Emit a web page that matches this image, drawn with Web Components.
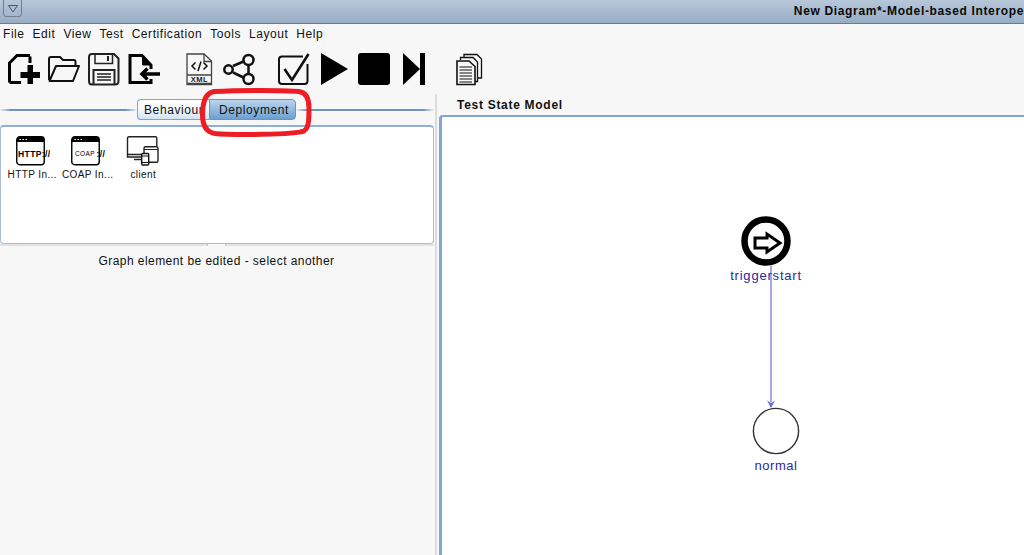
<!DOCTYPE html>
<html><head><meta charset="utf-8"><style>
html,body{margin:0;height:100%;overflow:hidden;background:#f7f7f7}
body{font-family:"Liberation Sans",Arial,sans-serif;font-size:12px;color:#111}
app-shell{height:555px}
</style></head><body>
<app-shell></app-shell>
<script>
function def(name,html){customElements.define(name,class extends HTMLElement{constructor(){super();this.attachShadow({mode:'open'}).innerHTML=html;}})}

def('title-bar',`<style>
:host{display:flex;align-items:flex-start;height:23px;box-sizing:content-box;border-bottom:1px solid #5f7f9f;background:linear-gradient(#b7c7da,#98adc5);overflow:hidden;position:relative}
.btn{width:17px;height:16px;margin:-1px 0 0 3px;border:1px solid #6f7f8f;border-radius:0 0 3px 3px;display:flex;align-items:center;justify-content:center;flex:none}
.t{margin-left:auto;font:bold 12px "Liberation Sans",sans-serif;letter-spacing:.65px;white-space:nowrap;line-height:22px;color:#0a0a0a}
</style><div class="btn"><svg width="12" height="9" viewBox="0 0 12 9"><path d="M1.5 1.5H10.5L6 8Z" fill="none" stroke="#4a5a6a"/></svg></div><div class="t"><slot></slot></div>`);

def('menu-bar',`<style>
:host{display:flex;height:20px;padding-left:3px;gap:8px;align-items:center;font:12px "Liberation Sans",sans-serif;letter-spacing:.55px;color:#111}
</style><slot></slot>`);

def('tool-bar',`<style>
:host{display:flex;height:46px;align-items:flex-start;padding:9px 0 0 8px;box-sizing:border-box}
::slotted(svg){flex:none;display:block}
</style><slot></slot>`);

def('tab-switch',`<style>
:host{display:flex;align-items:center;height:21px;margin-top:9px;position:relative}
.line{height:2px;background:linear-gradient(90deg,#eef2f6,#6f93bb 8%,#6f93bb 92%,#eef2f6)}
.line.r{width:138px}
.line.l{width:137px}
.tabs{display:flex;height:21px;font:12px "Liberation Sans",sans-serif;letter-spacing:.6px}
.tab{box-sizing:border-box;border:1px solid #7fa3cc;display:flex;align-items:center;justify-content:center;color:#111}
.a{width:72px;border-radius:4px 0 0 4px;background:linear-gradient(#fff,#f4f8fc 50%,#d2e3f4);padding-left:6px;justify-content:flex-start;border-right:0}
.b{width:87px;border-radius:0 4px 4px 0;background:linear-gradient(#bcd4ec,#94bade 50%,#6c9fd2);border-color:#6a94c2;padding-left:3px}
</style><div class="line l"></div><div class="tabs"><div class="tab a">Behaviour</div><div class="tab b">Deployment</div></div><div class="line r"></div>`);

def('palette-panel',`<style>
:host{display:flex;box-sizing:border-box;height:119px;margin-top:5px;width:434px;padding:8px 0 0 3.5px;background:#fff;border:1px solid #a9bfd8;border-top:2px solid #8eb0d6;border-radius:4px;align-items:flex-start}
</style><slot></slot>`);

def('palette-item',`<style>
:host{display:flex;flex-direction:column;align-items:center;width:55.5px;font:10px "Liberation Sans",sans-serif;letter-spacing:.4px;color:#111;white-space:nowrap}
.ic{height:32px;display:flex;align-items:center}
.l{line-height:12px;margin-top:2px}
</style><div class="ic"><slot name="i"></slot></div><div class="l"><slot></slot></div>`);

def('side-panel',`<style>
:host{display:flex;flex-direction:column;width:435px;flex:none}
.handle{height:2px;position:relative;background:#e2e2e2;width:434px}
.handle i{position:absolute;left:207px;top:0;width:17px;height:2px;background:#f7f7f7;border:solid #b8c4d2;border-width:0 1px}
.msg{text-align:center;margin-top:7px;width:433px;font:12px "Liberation Sans",sans-serif;letter-spacing:.45px;line-height:16px;color:#111}
</style><slot></slot><div class="handle"><i></i></div><div class="msg">Graph element be edited - select another</div>`);

def('state-node',`<style>
:host{position:absolute;display:block;font:13px "Liberation Sans",sans-serif;color:#2a2a9a;white-space:nowrap;transform:translateX(-50%);line-height:15px}
</style><slot></slot>`);

def('state-canvas',`<style>
:host{display:block;flex:1;position:relative;background:#fff;border:solid #7fa6d6;border-width:2px 0 0 3px;border-radius:4px 0 0 0;overflow:hidden}
svg{position:absolute;left:0;top:0}
</style><svg width="585" height="440" viewBox="442 117 585 440">
<line x1="771" y1="266" x2="771" y2="402" stroke="#6a6ae8" stroke-width="1.2"/>
<path d="M767 400.500L771 403 775 400.500 771 408Z" fill="#6a6ae8"/>
<circle cx="766" cy="241" r="21.500" fill="#fff" stroke="#000" stroke-width="6.500"/>
<path d="M755 238H767V234L780 243 767 252V248H755Z" fill="#fff" stroke="#000" stroke-width="3"/>
<circle cx="776" cy="431" r="22.600" fill="#fff" stroke="#333" stroke-width="1.400"/>
</svg><slot></slot>`);

def('model-panel',`<style>
:host{display:flex;flex-direction:column;flex:1;min-width:0;padding-left:2px}
.h{font:bold 12px "Liberation Sans",sans-serif;letter-spacing:.71px;height:25px;line-height:31px;padding-left:18px;box-sizing:border-box;color:#111}
</style><div class="h">Test State Model</div><slot></slot>`);

def('work-area',`<style>
:host{display:flex;flex:1;min-height:0}
.d{width:2px;flex:none;background:#dcdcdc;margin-top:4px}
</style><slot name="left"></slot><div class="d"></div><slot name="right"></slot>`);

def('red-mark',`<style>
:host{position:absolute;left:195px;top:85px;width:120px;height:55px;display:block}
svg{display:block}
</style><svg width="120" height="55" viewBox="195 85 120 55"><path d="M214 91.500C240 90 285 90 299 91.500C306 92.500 309 98 309 108C309 122 308.500 128 304 131C295 135 230 135 215 133.500C206 132 202.500 125 202.500 115C202.500 103 205 93 214 91.500Z" fill="none" stroke="#ee1c25" stroke-width="5"/></svg>`);

def('app-shell',`<style>
:host{display:flex;flex-direction:column;position:relative;overflow:hidden;width:1024px}
</style>
<title-bar>New Diagram*-Model-based Interope</title-bar>
<menu-bar><span>File</span><span>Edit</span><span>View</span><span>Test</span><span>Certification</span><span>Tools</span><span>Layout</span><span>Help</span></menu-bar>
<tool-bar>
<svg width="32" height="32" viewBox="8 53 32 32" style="margin-right:8px"><path d="M30 56.500V63M9.500 82.500V63L17 55.500H30M9.500 82.500H21" fill="none" stroke="#000" stroke-width="3"/><path d="M20.500 72H27.500V65H33V72H40V78H33V84H27.500V78H20.500Z" fill="#000"/></svg>
<svg width="32" height="32" viewBox="48 53 32 32" style="margin-right:8px"><path d="M49 80V59Q49 57 51 57H60L63 60H74Q75.500 60 75.500 62V65" fill="none" stroke="#111" stroke-width="2"/><path d="M49.500 81L56 66H79L73 81Z" fill="none" stroke="#111" stroke-width="2" stroke-linejoin="round"/></svg>
<svg width="32" height="33" viewBox="88 53 32 33" style="margin-right:8px"><path d="M92 54H114L118.500 58.500V81Q118.500 84.500 115 84.500H92Q89 84.500 89 81V57Q89 54 92 54Z" fill="none" stroke="#222" stroke-width="2"/><path d="M95 54V63.500H112.500V54" fill="none" stroke="#222" stroke-width="1.500"/><path d="M107 56H109V61H107Z" fill="#222"/><path d="M93.500 84V70H114.500V84" fill="none" stroke="#222" stroke-width="2"/><path d="M97 74H111M97 77H111M97 80H111" stroke="#222" stroke-width="1.300"/></svg>
<svg width="33" height="33" viewBox="128 53 33 33" style="margin-right:25px"><path d="M151 69V65L142 55.500H130V82.500H151V79" fill="none" stroke="#000" stroke-width="3"/><path d="M142.500 56V65H151Z" fill="#000" stroke="#000"/><path d="M160 74H144" stroke="#000" stroke-width="3.500"/><path d="M147.500 68.500L142 74 147.500 79.500" fill="none" stroke="#000" stroke-width="3.500"/></svg>
<svg width="27" height="33" viewBox="186 53 27 33" style="margin-right:10px"><path d="M187 84.500V54H204L211.500 61V84.500Z" fill="none" stroke="#444" stroke-width="1.300"/><path d="M204 54V61.500H211.500" fill="none" stroke="#444" stroke-width="1.300"/><path d="M187 75H211.500M187 83.500H211.500" stroke="#444" stroke-width="1.300"/><path d="M195.500 62.500L192 66 195.500 69.500M203.500 62.500L207 66 203.500 69.500M201 61.500L198 71" fill="none" stroke="#111" stroke-width="1.500"/><text x="199.500" y="82.300" text-anchor="middle" font-family="Liberation Sans" font-weight="bold" font-size="7.500" letter-spacing=".5" fill="#222">XML</text></svg>
<svg width="33" height="33" viewBox="223 53 33 33" style="margin-right:21px"><path d="M233 66L243.500 61.500M233 72.500L243.500 77.500M248.500 65V74" stroke="#111" stroke-width="2.500" fill="none"/><circle cx="228.500" cy="69.500" r="4.200" fill="none" stroke="#111" stroke-width="2.500"/><circle cx="248.500" cy="60" r="5" fill="none" stroke="#111" stroke-width="2.500"/><circle cx="248.500" cy="79" r="5" fill="none" stroke="#111" stroke-width="2.500"/></svg>
<svg width="33" height="33" viewBox="277 53 33 33" style="margin-right:11px"><path d="M303 56.500H282Q279 56.500 279 59.500V81Q279 84 282 84H304.500Q307.500 84 307.500 81V64" fill="none" stroke="#111" stroke-width="2"/><path d="M284.500 69L292 80 308.500 54" fill="none" stroke="#111" stroke-width="2.600"/></svg>
<svg width="28" height="33" viewBox="321 53 28 33" style="margin-right:9px"><path d="M321 53L348 69 321 85Z" fill="#000"/></svg>
<svg width="33" height="33" viewBox="358 53 33 33" style="margin-right:12px"><rect x="358" y="53" width="32" height="32" rx="3" fill="#000"/></svg>
<svg width="23" height="33" viewBox="403 53 23 33" style="margin-right:30px"><path d="M403 53L420 69 403 85Z" fill="#000"/><rect x="420" y="53" width="5" height="32" fill="#000"/></svg>
<svg width="27" height="33" viewBox="456 53 27 33"><path d="M464 58V54.500H477L481.500 59V78H477" fill="none" stroke="#111" stroke-width="1.300"/><path d="M460.500 60V57.500H473L477.500 62V81.500H475" fill="#f7f7f7" stroke="#111" stroke-width="1.300"/><path d="M457 61H469L475 66.500V84.500H457Z" fill="#f7f7f7" stroke="#111" stroke-width="1.600"/><path d="M459.500 67H472M459.500 70H472M459.500 73H472M459.500 76H472M459.500 79H472M459.500 82H472" stroke="#111" stroke-width="1.100"/></svg>
</tool-bar>
<work-area>
<side-panel slot="left">
<tab-switch></tab-switch>
<palette-panel>
<palette-item><svg slot="i" width="35" height="31" viewBox="-1 0 35 31"><rect x=".75" y=".75" width="27.500" height="28" rx="3" fill="#fff" stroke="#000" stroke-width="1.400"/><path d="M1 4Q1 1 4 1H25Q28 1 28 4V6H1Z" fill="#000"/><path d="M3.500 3.500H5M6.500 3.500H8M9.500 3.500H11" stroke="#fff"/><text x="2" y="20.500" font-family="Liberation Sans" font-weight="bold" font-size="8.500" fill="#000">HTTP://</text></svg>HTTP In...</palette-item>
<palette-item><svg slot="i" width="35" height="31" viewBox="-1 0 35 31"><rect x=".75" y=".75" width="27.500" height="28" rx="3" fill="#fff" stroke="#000" stroke-width="1.400"/><path d="M1 4Q1 1 4 1H25Q28 1 28 4V6H1Z" fill="#000"/><path d="M3.500 3.500H5M6.500 3.500H8M9.500 3.500H11" stroke="#fff"/><text x="4" y="20" font-family="Liberation Sans" font-size="6.500" fill="#000">COAP</text><text x="25.500" y="20.500" font-family="Liberation Sans" font-weight="bold" font-size="8.500" fill="#000">://</text></svg>COAP In...</palette-item>
<palette-item><svg slot="i" width="35" height="31" viewBox="0 0 35 31"><path d="M17 21H1.500V2.500Q1.500 .8 3 .8H29.500Q30.800 .8 30.800 2.500V10" fill="none" stroke="#222" stroke-width="1.400"/><path d="M1.500 18.500H17M8 23.500H17" stroke="#222" stroke-width="1.400"/><rect x="18" y="10.800" width="14" height="15.500" rx="1.500" fill="#fff" stroke="#222" stroke-width="1.400"/><path d="M18 13.500H32" stroke="#222"/><rect x="15.700" y="17.500" width="7" height="11.500" rx="1" fill="#fff" stroke="#111" stroke-width="1.400"/><path d="M16 20H22.500M16 26.500H22.500" stroke="#111"/></svg>client</palette-item>
</palette-panel>
</side-panel>
<model-panel slot="right">
<state-canvas>
<state-node style="left:324px;top:151px;letter-spacing:.8px">triggerstart</state-node>
<state-node style="left:334px;top:341px;letter-spacing:.55px">normal</state-node>
</state-canvas>
</model-panel>
</work-area>
<red-mark></red-mark>`);
</script>
</body></html>
